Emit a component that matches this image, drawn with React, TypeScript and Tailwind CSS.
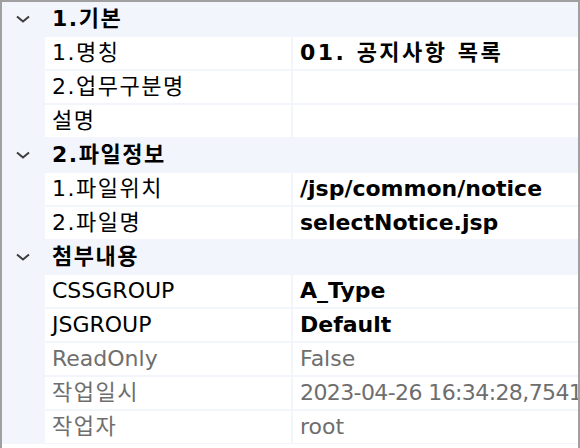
type Prop = { label: string; value: string; bold?: boolean; muted?: boolean; tight?: boolean }
type Group = { title: string; items: Prop[] }

const groups: Group[] = [
  {
    title: '1.기본',
    items: [
      { label: '1.명칭', value: '01. 공지사항 목록', bold: true },
      { label: '2.업무구분명', value: '' },
      { label: '설명', value: '' }
    ]
  },
  {
    title: '2.파일정보',
    items: [
      { label: '1.파일위치', value: '/jsp/common/notice', bold: true },
      { label: '2.파일명', value: 'selectNotice.jsp', bold: true }
    ]
  },
  {
    title: '첨부내용',
    items: [
      { label: 'CSSGROUP', value: 'A_Type', bold: true },
      { label: 'JSGROUP', value: 'Default', bold: true },
      { label: 'ReadOnly', value: 'False', muted: true },
      { label: '작업일시', value: '2023-04-26 16:34:28,75415', muted: true, tight: true },
      { label: '작업자', value: 'root', muted: true }
    ]
  }
]

const hasHangul = (s: string) => /[\uac00-\ud7a3]/.test(s)

function Chevron(): React.JSX.Element {
  return (
    <svg width="14" height="8" viewBox="0 0 14 8" className="text-[#3c3c3c]">
      <path d="M1 1.5 L7 6.5 L13 1.5" fill="none" stroke="currentColor" strokeWidth="2" />
    </svg>
  )
}

function GroupHeader({ title }: { title: string }): React.JSX.Element {
  return (
    <div className="flex h-[34px] items-center bg-[#f2f5fb]">
      <div className="flex w-[43px] shrink-0 items-center justify-center pr-[2px]">
        <Chevron />
      </div>
      <span className="pl-[7px] text-[22px] font-bold leading-none tracking-[1.5px] text-black">{title}</span>
    </div>
  )
}

function PropRow({ item }: { item: Prop }): React.JSX.Element {
  const color = item.muted ? 'text-[#6e6e6e]' : 'text-black'
  const labelTrack = hasHangul(item.label) ? 'tracking-[1.5px]' : ''
  const valueTrack = item.tight ? 'tracking-[-0.6px]' : hasHangul(item.value) ? 'tracking-[2.5px]' : ''
  return (
    <div className="flex h-[34px] gap-[2px] bg-[#f2f5fb] py-px">
      <div className="w-[41px] shrink-0" />
      <div className={`flex w-[246px] shrink-0 items-center bg-white pl-[7px] text-[22px] leading-none ${color} ${labelTrack}`}>
        {item.label}
      </div>
      <div
        className={`flex min-w-0 flex-1 items-center overflow-hidden whitespace-nowrap bg-white pl-[7px] text-[22px] leading-none ${color} ${valueTrack} ${item.bold ? 'font-bold' : ''}`}
      >
        {item.value}
      </div>
    </div>
  )
}

export default function App(): React.JSX.Element {
  return (
    <div
      className="h-[448px] w-[580px] overflow-hidden border-x-2 border-t-2 border-[#a0a0a0] bg-white"
      style={{ fontFamily: '"DejaVu Sans", "Noto Sans CJK KR", sans-serif' }}
    >
      {groups.map((g) => (
        <div key={g.title}>
          <GroupHeader title={g.title} />
          {g.items.map((it) => (
            <PropRow key={it.label} item={it} />
          ))}
        </div>
      ))}
    </div>
  )
}
